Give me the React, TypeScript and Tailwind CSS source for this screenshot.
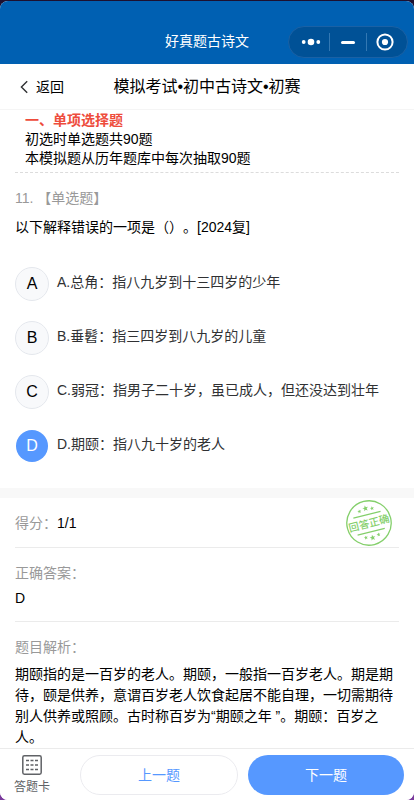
import { useState } from 'react';

const options = [
  { key: 'A', text: 'A.总角：指八九岁到十三四岁的少年' },
  { key: 'B', text: 'B.垂髫：指三四岁到八九岁的儿童' },
  { key: 'C', text: 'C.弱冠：指男子二十岁，虽已成人，但还没达到壮年' },
  { key: 'D', text: 'D.期颐：指八九十岁的老人' },
];

function CapsuleMenu() {
  return (
    <div className="flex h-8 w-30 items-center rounded-full border border-[#1a61a5] bg-[#005196]">
      <button type="button" aria-label="更多" className="flex h-full flex-1 items-center justify-center pl-1">
        <svg width="20" height="8" viewBox="0 0 20 8" fill="#fff">
          <circle cx="2.7" cy="4" r="1.9" />
          <circle cx="10" cy="4" r="3.3" />
          <circle cx="17.3" cy="4" r="1.9" />
        </svg>
      </button>
      <span className="h-[18px] w-px bg-[#3378b3]" />
      <button type="button" aria-label="最小化" className="flex h-full flex-1 items-center justify-center">
        <span className="h-[3px] w-3.5 rounded-full bg-white" />
      </button>
      <span className="h-[18px] w-px bg-[#3378b3]" />
      <button type="button" aria-label="关闭" className="flex h-full flex-1 items-center justify-center pr-1">
        <svg width="18" height="18" viewBox="0 0 18 18">
          <circle cx="9" cy="9" r="7.6" fill="none" stroke="#fff" strokeWidth="2" />
          <circle cx="9" cy="9" r="3.1" fill="#fff" />
        </svg>
      </button>
    </div>
  );
}

const STAR = 'M0 -3 L0.8 -1 L2.9 -0.9 L1.2 0.4 L1.8 2.5 L0 1.3 L-1.8 2.5 L-1.2 0.4 L-2.9 -0.9 L-0.8 -1 Z';

function CorrectStamp() {
  return (
    <svg width="48" height="48" viewBox="0 0 48 48" role="img" aria-label="回答正确">
      <g transform="rotate(-14 24 24)" fill="#84cf6b">
        <circle cx="24" cy="24" r="22.2" fill="none" stroke="#84cf6b" strokeWidth="1.3" />
        <path d="M10 15.5H38M10 33H38" stroke="#84cf6b" strokeWidth="1.1" />
        <path d={STAR} transform="translate(24 9)" />
        <path d={STAR} transform="translate(17.5 10.5) scale(.7)" />
        <path d={STAR} transform="translate(30.5 10.5) scale(.7)" />
        <path d={STAR} transform="translate(24 39.2)" />
        <path d={STAR} transform="translate(17.5 37.5) scale(.7)" />
        <path d={STAR} transform="translate(30.5 37.5) scale(.7)" />
        <text x="24" y="28" textAnchor="middle" fontSize="10.4" fontWeight="500">
          回答正确
        </text>
      </g>
    </svg>
  );
}

function AnswerCardIcon() {
  return (
    <svg width="20" height="20" viewBox="0 0 20 20" fill="none" stroke="#606266">
      <rect x="0.8" y="0.8" width="18.4" height="18.4" rx="1.6" strokeWidth="1.5" />
      <path d="M4 5.5h3M8.5 5.5h3M13 5.5h3M4 10h3M8.5 10h3M13 10h3M4 14.5h3M8.5 14.5h3M13 14.5h3" strokeWidth="1.4" />
    </svg>
  );
}

export default function App() {
  const [choice, setChoice] = useState('D');

  return (
    <div className="flex min-h-screen flex-col bg-linear-to-b from-[#1c1030] to-[#7a3a9c] pt-px font-['Liberation_Sans','Noto_Sans_CJK_SC',sans-serif] text-sm text-black [text-spacing-trim:space-all]">
      <div className="flex flex-1 flex-col overflow-hidden rounded-lg bg-white">
        <header className="grid h-[63px] grid-cols-[1fr_auto_1fr] items-end bg-[#0060b2] px-1.5 pb-1.5">
          <h1 className="col-start-2 flex h-[34px] items-center text-white">好真题古诗文</h1>
          <div className="flex justify-end">
            <CapsuleMenu />
          </div>
        </header>

        <nav className="grid h-[46px] grid-cols-[1fr_auto_1fr] items-center border-b border-[#f5f5f5] px-5">
          <button type="button" className="flex items-center gap-2 justify-self-start">
            <svg width="8" height="14" viewBox="0 0 8 14" fill="none" stroke="#303133" strokeWidth="1.4">
              <path d="M7.2 1.2L1.4 7l5.8 5.8" />
            </svg>
            返回
          </button>
          <h2 className="text-base">模拟考试•初中古诗文•初赛</h2>
        </nav>

        <main className="flex-1">
          <section className="px-[15px]">
            <div className="border-b border-dashed border-[#dcdcdc] px-2.5 pt-px pb-1 leading-[19px]">
              <h3 className="font-bold text-[#ee4c3c]">一、单项选择题</h3>
              <p>初选时单选题共90题</p>
              <p>本模拟题从历年题库中每次抽取90题</p>
            </div>
            <p className="pt-[15px] leading-5 text-[#999999]">11. 【单选题】</p>
            <p className="pt-[9px] leading-5">以下解释错误的一项是（）。[2024复]</p>

            <div role="radiogroup" aria-label="选项" className="flex flex-col gap-5 pt-[30px] pb-[25px]">
              {options.map((o) => (
                <div key={o.key} className="flex items-start gap-2">
                  <div className="grid size-[34px] shrink-0 place-items-center">
                    <input
                      id={`option-${o.key}`}
                      type="radio"
                      name="answer"
                      value={o.key}
                      checked={choice === o.key}
                      onChange={() => setChoice(o.key)}
                      className="peer col-start-1 row-start-1 size-full cursor-pointer appearance-none rounded-full border border-[#e4e7ed] bg-[#f8f9fb] bg-clip-padding checked:border-transparent checked:bg-[#5698ff]"
                    />
                    <span className="pointer-events-none col-start-1 row-start-1 text-base peer-checked:text-white">
                      {o.key}
                    </span>
                  </div>
                  <label htmlFor={`option-${o.key}`} className="cursor-pointer py-[5px] leading-5 text-[#303133]">
                    {o.text}
                  </label>
                </div>
              ))}
            </div>
          </section>

          <div className="h-2.5 bg-[#f8f8f8]" />

          <section className="px-[15px]">
            <div className="flex h-[50px] items-center justify-between border-b border-[#ebebeb] pr-1.5">
              <p>
                <span className="text-[#999999]">得分：</span>1/1
              </p>
              <CorrectStamp />
            </div>
            <div className="border-b border-[#ebebeb] pt-[15px] pb-[13px]">
              <p className="leading-5 text-[#999999]">正确答案：</p>
              <p className="pt-[5px] leading-5">D</p>
            </div>
            <div className="pt-[15px]">
              <p className="leading-5 text-[#999999]">题目解析：</p>
              <p className="pt-[7px] leading-[21px]">
                期颐指的是一百岁的老人。期颐，一般指一百岁老人。期是期待，颐是供养，意谓百岁老人饮食起居不能自理，一切需期待别人供养或照顾。古时称百岁为“期颐之年 ”。期颐：百岁之人。
              </p>
            </div>
          </section>
        </main>

        <footer className="sticky bottom-0 flex h-[52px] items-center gap-2.5 border-t border-[#ebebeb] bg-white pr-2.5">
          <button type="button" className="flex w-[70px] flex-col items-center gap-1 pr-1.5 text-xs text-[#606266]">
            <AnswerCardIcon />
            答题卡
          </button>
          <button type="button" className="h-10 flex-1 rounded-full border border-[#ebebef] text-[#5698ff]">
            上一题
          </button>
          <button type="button" className="h-10 flex-1 rounded-full bg-[#5698ff] text-white">
            下一题
          </button>
        </footer>
      </div>
    </div>
  );
}
